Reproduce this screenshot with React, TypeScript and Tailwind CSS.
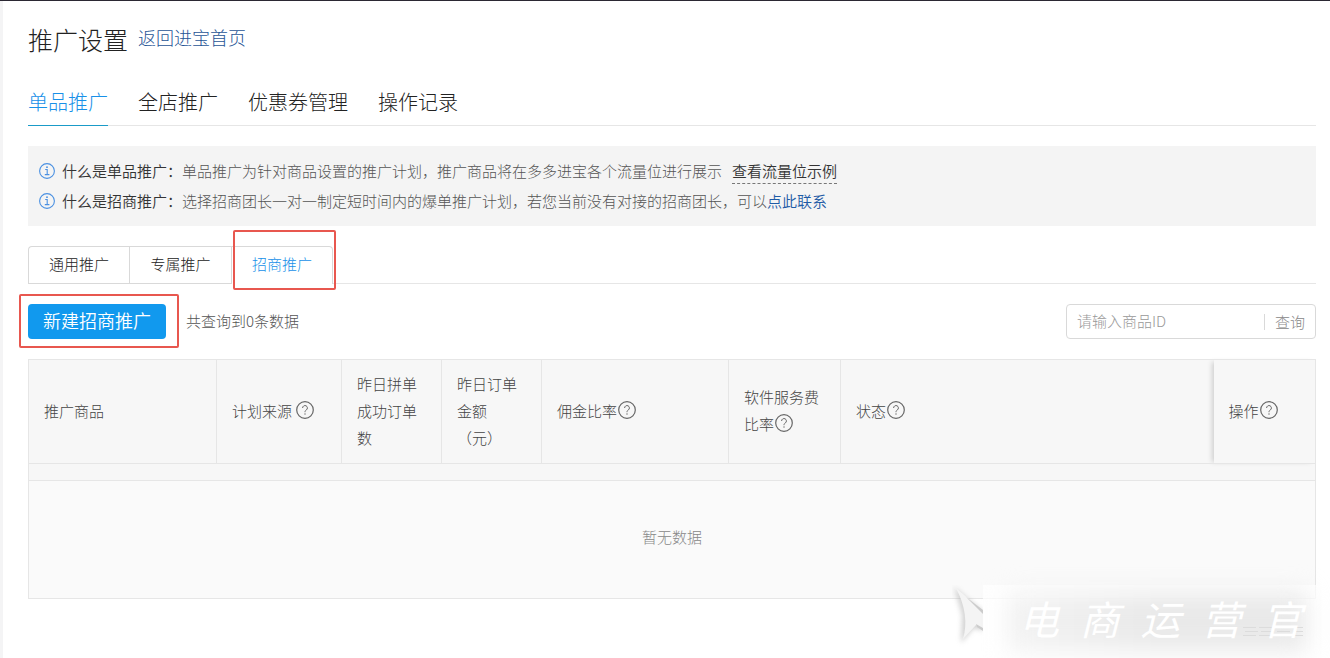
import type { ReactNode } from 'react';

const mainTabs = ['单品推广', '全店推广', '优惠券管理', '操作记录'];
const subTabs = ['通用推广', '专属推广', '招商推广'];

const InfoIcon = () => (
  <svg className="mr-[7px] h-4 w-4 shrink-0 text-[#4a90e2]" viewBox="0 0 16 16" fill="none" stroke="currentColor" aria-hidden="true">
    <circle cx="8" cy="8" r="7.4" strokeWidth="1.1" />
    <path d="M6.2 6.5h2v5M5.8 11.6h4.6" strokeWidth="1.1" />
    <circle cx="8" cy="4.2" r="0.9" fill="currentColor" stroke="none" />
  </svg>
);

const HelpIcon = () => (
  <svg className="ml-px inline-block h-[18px] w-[18px] align-[-2px]" viewBox="0 0 18 18" fill="none" stroke="#666" aria-hidden="true">
    <circle cx="9" cy="9" r="8.3" strokeWidth="1.2" />
    <path d="M6.6 7a2.4 2.4 0 1 1 3.8 1.9C9.4 9.6 9 10 9 11.2" strokeWidth="1" />
    <circle cx="9" cy="13" r="0.7" fill="#666" stroke="none" />
  </svg>
);

interface InfoRowProps {
  title: string;
  children: ReactNode;
}

const InfoRow = ({ title, children }: InfoRowProps) => (
  <div className="flex h-[30px] items-center">
    <InfoIcon />
    <span className="font-[350] text-[#333]">{title}</span>
    <span>{children}</span>
  </div>
);

// red frame around the highlighted control
const Highlight = ({ className }: { className: string }) => (
  <span className={`pointer-events-none absolute rounded-[2px] border-2 border-[#e8574f] ${className}`} />
);

const Watermark = () => (
  <div className="pointer-events-none absolute right-0 bottom-0 flex h-[74px] w-[378px] select-none" aria-hidden="true">
    <svg className="h-full w-[31px] shrink-0" viewBox="0 0 31 74">
      <defs>
        <filter id="soft" x="-50%" y="-50%" width="200%" height="200%">
          <feGaussianBlur stdDeviation="2.5" />
        </filter>
      </defs>
      <path d="M2 2 31 26V46L22 43 9 58 10 30Z" fill="#aaa" opacity=".5" filter="url(#soft)" />
      <path d="M4 3 31 26V45L24 40 11 54Q18 30 4 3Z" fill="#f4f4f4" />
      <path d="M14 12 31 25V29ZM24 39 31 43V46L25 42Z" fill="#ccc" />
    </svg>
    <div className="relative flex-1 bg-white/70">
      <div className="absolute inset-x-6 inset-y-2 bg-linear-to-r from-[#f3f3f3] via-[#e9e9e9] to-[#e9e9e9] blur-md" />
      <svg className="absolute right-[25px] bottom-[22px] h-3 w-[62px]" viewBox="0 0 62 12" stroke="#dcdcdc" strokeDasharray="13 3">
        <path d="M0 2.5H60M2 6.5H60M0 10.5H60" />
      </svg>
      <div className="relative flex h-[66px] items-center justify-between pr-7 pl-9 text-[40px] font-normal text-white italic">
        {['电', '商', '运', '营', '官'].map((char) => (
          <span key={char}>{char}</span>
        ))}
      </div>
    </div>
  </div>
);

const columns: { width?: string; content: ReactNode }[] = [
  { width: 'w-[188px]', content: '推广商品' },
  { width: 'w-[125px]', content: <>计划来源 <HelpIcon /></> },
  { width: 'w-[100px]', content: '昨日拼单成功订单数' },
  { width: 'w-[100px]', content: <>昨日订单<br />金额<br />（元）</> },
  { width: 'w-[187px]', content: <>佣金比率<HelpIcon /></> },
  { width: 'w-[112px]', content: <>软件服务费<br />比率<HelpIcon /></> },
  { content: <>状态<HelpIcon /></> },
  { width: 'w-[102px]', content: <>操作<HelpIcon /></> },
];

const PromotionTable = () => (
  <table className="mt-5 w-full table-fixed border-collapse border border-[#e6e6e6] bg-[#f7f7f7] text-left">
    <thead>
      <tr className="h-[104px]">
        {columns.map((column, index) => {
          const last = index === columns.length - 1;
          const beforeLast = index === columns.length - 2;
          return (
            <th
              key={index}
              className={`px-[15px] pb-[3px] leading-[27px] font-light text-[#444] ${column.width ?? ''} ${
                last ? 'shadow-[-4px_0_5px_-2px_rgba(0,0,0,0.16)]' : beforeLast ? '' : 'border-r border-[#e6e6e6]'
              }`}
            >
              {column.content}
            </th>
          );
        })}
      </tr>
    </thead>
    <tbody>
      <tr className="h-[17px] border-y border-[#e6e6e6]">
        <td colSpan={8} />
      </tr>
      <tr className="h-[118px] bg-[#fafafa]">
        <td colSpan={8} className="pb-1 text-center text-[#888]">暂无数据</td>
      </tr>
    </tbody>
  </table>
);

export default function App() {
  return (
    <div className="relative min-h-screen overflow-hidden border-t border-[#2b2833] bg-[#f4f4f5] pl-[3px] font-['Noto_Sans_CJK_SC',sans-serif] text-[15px] font-light text-[#555]">
      <main className="min-h-screen bg-white pt-5 pr-[14px] pl-[25px]">
        <header className="flex h-9 items-center gap-[10px]">
          <h1 className="pt-[2px] text-[25px] font-light text-[#222]">推广设置</h1>
          <a href="#" className="pb-1 text-lg text-[#1f5596]">返回进宝首页</a>
        </header>

        <nav className="mt-6 flex h-[45px] gap-[30px] border-b border-[#e6e6e6] text-xl">
          {mainTabs.map((tab, index) => (
            <a
              key={tab}
              href="#"
              className={`-mb-px flex items-center border-b pb-[2px] ${
                index === 0 ? 'border-[#1a9bc8] text-[#1890e8]' : 'border-transparent text-[#222]'
              }`}
            >
              {tab}
            </a>
          ))}
        </nav>

        <section className="mt-5 bg-[#f4f4f4] px-[11px] py-[10px]">
          <InfoRow title="什么是单品推广：">
            单品推广为针对商品设置的推广计划，推广商品将在多多进宝各个流量位进行展示
            <a href="#" className="ml-[10px] border-b border-dashed border-[#777] pb-[2px] font-[350] text-[#333]">查看流量位示例</a>
          </InfoRow>
          <InfoRow title="什么是招商推广：">
            选择招商团长一对一制定短时间内的爆单推广计划，若您当前没有对接的招商团长，可以
            <a href="#" className="font-[350] text-[#1f5ba6]">点此联系</a>
          </InfoRow>
        </section>

        <div className="mt-5 flex h-[38px] border-b border-[#e6e6e6]">
          {subTabs.map((tab, index) => {
            const active = index === subTabs.length - 1;
            return (
              <div key={tab} className={`relative -mb-px ${index === 0 ? 'w-[101px]' : 'w-[102px]'}`}>
                <button
                  type="button"
                  className={`h-full w-full border-t border-l border-[#d9d9d9] pb-[2px] ${
                    active ? 'rounded-tr border-r bg-white text-[#1890e8]' : 'border-b text-[#222]'
                  } ${index === 0 ? 'rounded-tl' : ''}`}
                >
                  {tab}
                </button>
                {active && <Highlight className="-top-4 left-[2px] h-[60px] w-[103px]" />}
              </div>
            );
          })}
        </div>

        <div className="mt-5 flex items-center justify-between">
          <div className="flex items-center gap-5">
            <div className="relative">
              <button type="button" className="block h-[35px] w-[138px] rounded bg-[#1199ee] pb-[3px] text-lg font-[350] text-white">
                新建招商推广
              </button>
              <Highlight className="-top-[10px] -left-[9px] h-[54px] w-[160px]" />
            </div>
            <span>共查询到0条数据</span>
          </div>
          <form className="flex h-[35px] w-[250px] items-center rounded border border-[#d9d9d9]">
            <input
              type="text"
              aria-label="商品ID"
              placeholder="请输入商品ID"
              className="min-w-0 flex-1 px-[10px] outline-none placeholder:text-[#999]"
            />
            <button type="button" className="h-4 border-l border-[#d9d9d9] px-[10px] leading-4 text-[#888]">
              查询
            </button>
          </form>
        </div>

        <PromotionTable />
      </main>
      <Watermark />
    </div>
  );
}
